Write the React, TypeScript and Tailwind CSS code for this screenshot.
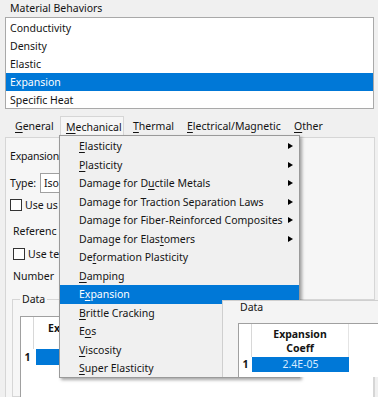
import React from "react";

type MenuItem = { pre: string; u: string; post: string; sub?: boolean; active?: boolean };

const menuItems: MenuItem[] = [
  { pre: "", u: "E", post: "lasticity", sub: true },
  { pre: "", u: "P", post: "lasticity", sub: true },
  { pre: "Damage for D", u: "u", post: "ctile Metals", sub: true },
  { pre: "Damage for Traction Separation Laws", u: "", post: "", sub: true },
  { pre: "Damage for Fiber-Reinforced Composites", u: "", post: "", sub: true },
  { pre: "Damage for Elas", u: "t", post: "omers", sub: true },
  { pre: "De", u: "f", post: "ormation Plasticity" },
  { pre: "", u: "D", post: "amping" },
  { pre: "E", u: "x", post: "pansion", active: true },
  { pre: "", u: "B", post: "rittle Cracking" },
  { pre: "E", u: "o", post: "s" },
  { pre: "", u: "V", post: "iscosity" },
  { pre: "", u: "S", post: "uper Elasticity" },
];

const behaviors = ["Conductivity", "Density", "Elastic", "Expansion", "Specific Heat"];

function Mn({ c }: { c: string }) {
  return <span className="underline underline-offset-[2px] decoration-[1px]">{c}</span>;
}

function CheckBox() {
  return <div className="w-[12px] h-[12px] border border-[#333333] bg-white shrink-0" />;
}

export default function App() {
  return (
    <div className="relative w-[378px] h-[397px] overflow-hidden bg-[#f0f0f0] font-['Noto_Sans','Open_Sans',sans-serif] text-[10.5px] leading-none text-[#141414]">
      {/* Title */}
      <div className="h-[17px] pl-[10px] flex items-center whitespace-nowrap">Material Behaviors</div>

      {/* Behaviors list */}
      <div className="ml-[5px] w-[369px] h-[92px] bg-white border border-[#a9a9a9] pt-[1px]">
        {behaviors.map((b) => (
          <div
            key={b}
            className={
              "h-[18px] flex items-center pl-[4px] whitespace-nowrap " +
              (b === "Expansion" ? "bg-[#0078d7] text-white" : "")
            }
          >
            {b}
          </div>
        ))}
      </div>

      {/* Tabs */}
      <div className="h-[28px] flex items-end pl-[8px] whitespace-nowrap">
        <div className="w-[52px] h-[22px] flex items-center pl-[7px]">
          <Mn c="G" />eneral
        </div>
        <div className="w-[64px] h-[22px] flex items-center pl-[5px] bg-[#f6f6f6] border-l border-t border-r border-[#d6d6d6] -mb-px relative z-[1]">
          <Mn c="M" />echanical
        </div>
        <div className="w-[56px] h-[22px] flex items-center pl-[9px]">
          <Mn c="T" />hermal
        </div>
        <div className="w-[107px] h-[22px] flex items-center pl-[7px]">
          <Mn c="E" />lectrical/Magnetic
        </div>
        <div className="w-[43px] h-[22px] flex items-center pl-[7px]">
          <Mn c="O" />ther
        </div>
      </div>

      {/* Tab page (left part partly covered by the menu) */}
      <div className="ml-[5px] w-[370px] h-[260px] bg-[#f6f6f6] border-t border-l border-r border-[#d6d6d6] pl-[4px] flex flex-col whitespace-nowrap">
        <div className="mt-[10px] h-[16px] flex items-center tracking-[-0.2px]">Expansion</div>
        <div className="mt-[9px] h-[20px] flex items-center">
          <span className="w-[30px] shrink-0">Type:</span>
          <div className="w-[140px] shrink-0 h-[20px] bg-white border border-[#a0a0a0] flex items-center pl-[3px]">Iso</div>
        </div>
        <div className="mt-[6px] h-[12px] flex items-center gap-[3px]">
          <CheckBox />
          <span>Use us</span>
        </div>
        <div className="mt-[12px] h-[16px] flex items-center pl-[3px]">Referenc</div>
        <div className="mt-[9px] h-[12px] flex items-center gap-[3px] pl-[3px]">
          <CheckBox />
          <span>Use te</span>
        </div>
        <div className="mt-[8px] h-[16px] flex items-center pl-[3px]">Number</div>

        <fieldset className="mt-[7px] ml-[2px] flex-1 border border-[#d6d6d6] pl-[7px] min-h-0">
          <legend className="ml-0 px-[2px] h-[16px] leading-[16px]">Data</legend>
          <div className="mt-[9px] h-[200px] bg-white border-l border-t border-[#a0a0a0] flex flex-col">
            <div className="flex h-[32px]">
              <div className="w-[13px] border-r border-[#d8d8d8]" />
              <div className="pt-[4px] pl-[14px] font-bold leading-[14px]">Ex</div>
            </div>
            <div className="flex h-[16px]">
              <div className="w-[13px] flex items-center justify-center font-bold">1</div>
              <div className="w-[96px] ml-[2px] bg-[#0078d7]" />
            </div>
          </div>
        </fieldset>
      </div>

      {/* Dropdown menu */}
      <div className="absolute left-[59px] top-[135px] w-[241px] h-[243px] bg-[#f0f0f0] border border-[#9a9a9a] shadow-[2px_2px_3px_rgba(0,0,0,0.35)] pt-[1px] z-10 whitespace-nowrap">
        {menuItems.map((m, i) => (
          <div
            key={i}
            className={
              "h-[18.5px] flex items-center pl-[19px] pr-[6px] " +
              (m.active ? "bg-[#0078d7] text-white" : "")
            }
          >
            <span>
              {m.pre}
              {m.u ? <Mn c={m.u} /> : null}
              {m.post}
            </span>
            {m.sub ? (
              <span className="ml-auto w-0 h-0 border-y-[3.5px] border-y-transparent border-l-[5px] border-l-black" />
            ) : null}
          </div>
        ))}
      </div>

      {/* Data window */}
      <div className="absolute left-[222px] top-[300px] w-[156px] h-[77px] bg-[#f4f4f4] border-l border-t border-[#cfcfcf] z-20 flex flex-col whitespace-nowrap">
        <div className="h-[13px] pl-[17px] flex items-center">Data</div>
        <div className="mt-[9px] ml-[15px] flex-1 bg-white border-l border-t border-[#a0a0a0] flex flex-col">
          <div className="flex h-[33px]">
            <div className="w-[13px] border-r border-[#d8d8d8]" />
            <div className="w-[97px] flex flex-col items-center justify-center font-bold leading-[14px] border-r border-[#e4e4e4]">
              <span>Expansion</span>
              <span>Coeff</span>
            </div>
          </div>
          <div className="flex h-[15px]">
            <div className="w-[13px] flex items-center justify-center font-bold">1</div>
            <div className="w-[97px] bg-[#0078d7] text-[#d8ecff] flex items-center justify-center">2.4E-05</div>
          </div>
        </div>
      </div>
    </div>
  );
}
